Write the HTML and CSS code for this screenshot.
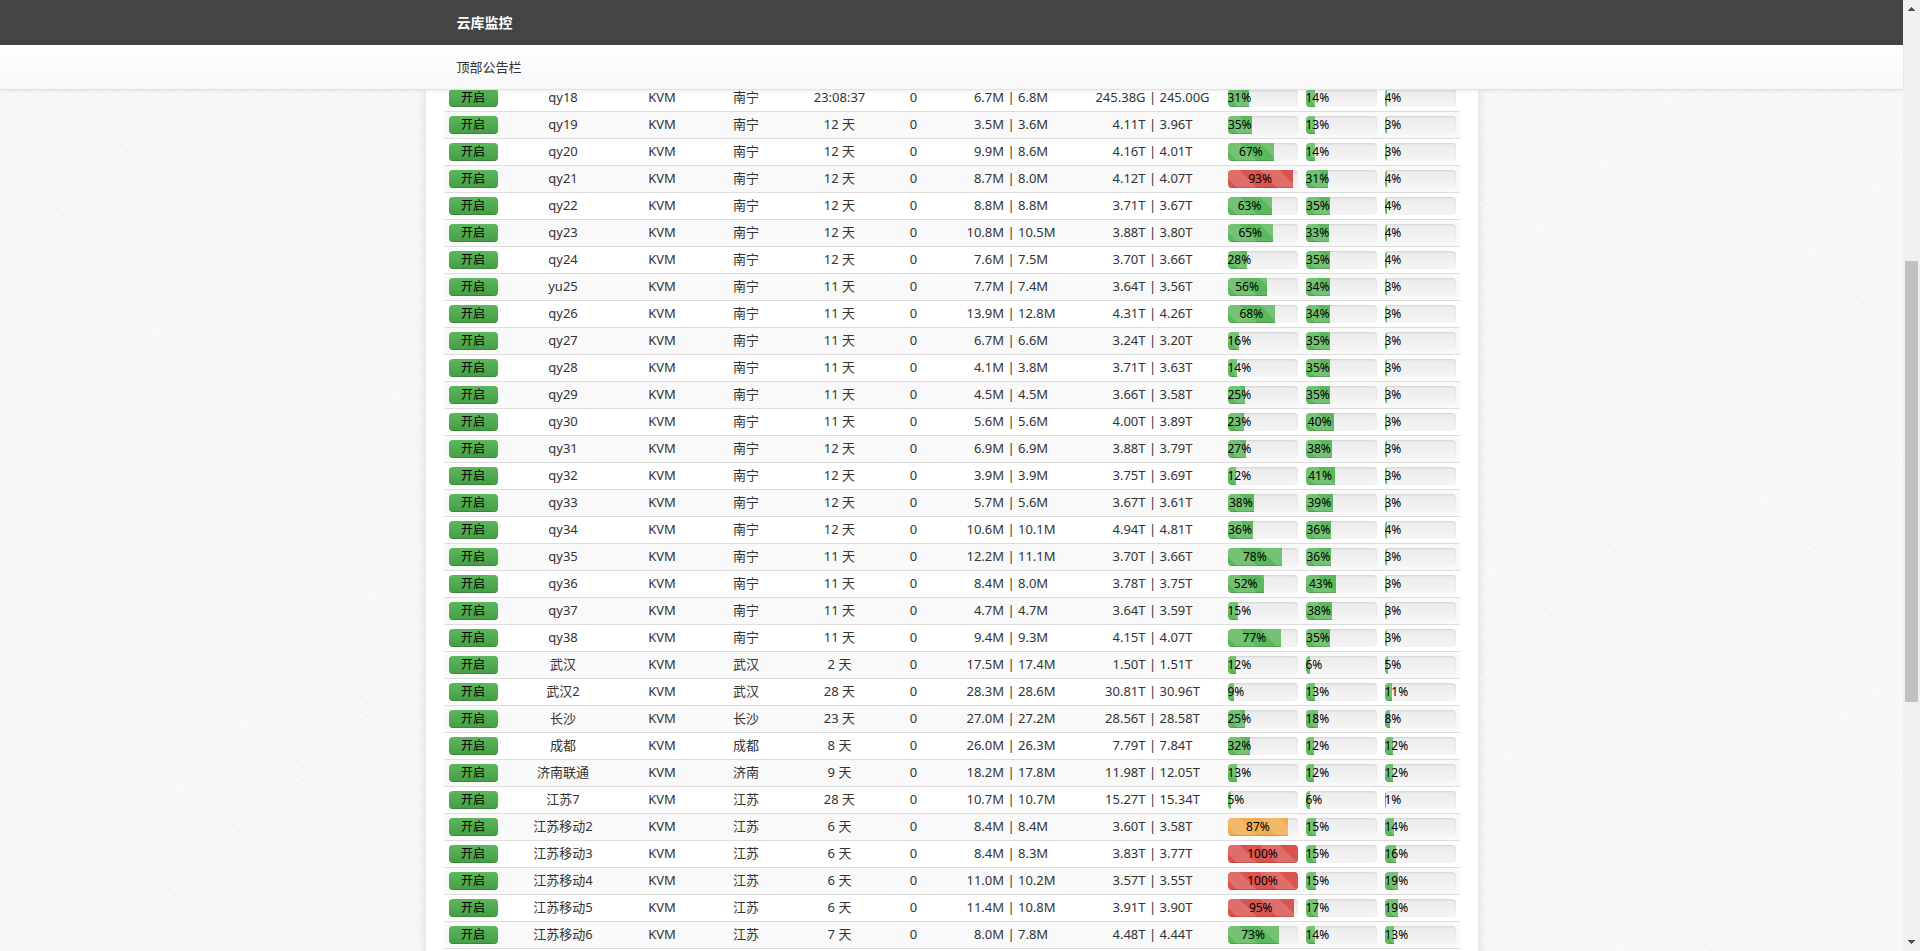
FILE: index.html
```
<!DOCTYPE html>
<html lang="zh-CN">
<head>
<meta charset="utf-8">
<title>云库监控</title>
<link rel="stylesheet" href="styles.css">
</head>
<body>
<div class="page">
  <header class="navbar"><div class="inner"><a class="brand" href="#">云库监控</a></div></header>
  <div class="notice"><div class="inner">顶部公告栏</div></div>
  <main class="content">
    <section class="panel">
      <table class="servers">
        <colgroup>
          <col class="c-status"><col class="c-name"><col class="c-type"><col class="c-place"><col class="c-uptime"><col class="c-load"><col class="c-net"><col class="c-traffic"><col class="c-cpu"><col class="c-ram"><col class="c-disk">
        </colgroup>
        <tbody id="servers"></tbody>
      </table>
    </section>
  </main>
</div>
<div class="scrollbar" aria-hidden="true">
  <svg class="arrow" viewBox="0 0 7 4" shape-rendering="crispEdges"><path d="M3 0h1v1h1v1h1v1h1v1H0V3h1V2h1V1h1z"/></svg>
  <div class="track"><div class="thumb"></div></div>
  <svg class="arrow" viewBox="0 0 7 4" shape-rendering="crispEdges"><path d="M0 0h7v1H6v1H5v1H4v1H3V3H2V2H1V1H0z"/></svg>
</div>
<script src="servers.js"></script>
</body>
</html>
```
FILE: styles.css
```
* { box-sizing: border-box; }
body {
  margin: 0;
  height: 100vh;
  overflow: hidden;
  display: flex;
  font: 13px/16px "Noto Sans", "Noto Sans CJK SC", sans-serif;
  color: #333;
  background: #f7f7f7;
}
.page {
  flex: 1;
  min-width: 0;
  display: flex;
  flex-direction: column;
  background:
    repeating-linear-gradient(-45deg, rgba(255,255,255,.3) 0 1px, transparent 2px 5px),
    repeating-linear-gradient(-38deg, rgba(255,255,255,.25) 0 2px, transparent 3px 11px),
    #f6f6f6;
}
.inner {
  max-width: 1052px;
  margin: 0 auto;
  padding: 0 31px;
}
.navbar {
  flex: none;
  background: #444;
  line-height: 45px;
}
.brand {
  display: block;
  color: #fff;
  font-size: 14px;
  font-weight: bold;
  text-decoration: none;
}
.notice {
  flex: none;
  position: relative;
  z-index: 1;
  line-height: 44px;
  background: linear-gradient(#fff, #f7f7f7);
  border-bottom: 1px solid #e2e2e2;
  box-shadow: 0 1px 3px rgba(0,0,0,.08);
}
.content {
  flex: 1;
  min-height: 0;
}
.panel {
  max-width: 1052px;
  margin: -6px auto 0;
  padding: 0 18px;
  background: #fff;
  box-shadow: 0 0 10px rgba(0,0,0,.12);
}
.servers {
  width: 100%;
  table-layout: fixed;
  border-spacing: 0;
  text-align: center;
  white-space: nowrap;
}
.c-status { width: 58px; }
.c-name { width: 123px; }
.c-type { width: 75px; }
.c-place { width: 93px; }
.c-uptime { width: 94px; }
.c-load { width: 54px; }
.c-net { width: 141px; }
.c-traffic { width: 142px; }
.c-cpu { width: 78px; }
.c-ram { width: 79px; }
.c-disk { width: 79px; }
.servers td {
  height: 27px;
  padding: 3px 4px 5px;
  border-top: 1px solid #ddd;
}
.servers tr:nth-child(even) { background: #f9f9f9; }
.servers .meter { padding: 4px; }
.servers .meter:first-child { padding-left: 5px; }
.progress {
  height: 18px;
  overflow: hidden;
  border-radius: 4px;
  background: linear-gradient(#ebebeb, #f5f5f5);
  box-shadow: inset 0 1px 2px rgba(0,0,0,.1);
  font-size: 12px;
  line-height: 18px;
  color: #000;
}
.bar {
  height: 100%;
  box-shadow: inset 0 -1px 0 rgba(0,0,0,.15);
}
.ok { background-color: #5cb85c; }
.warn { background-color: #f0ad4e; }
.danger { background-color: #d9534f; }
.striped {
  background-image: linear-gradient(45deg, rgba(255,255,255,.15) 25%, transparent 25% 50%, rgba(255,255,255,.15) 50% 75%, transparent 75%);
  background-size: 40px 40px;
  background-position: -8px 0;
}
.online { background: linear-gradient(#5cb85c, #449d44); }
.scrollbar {
  flex: none;
  width: 17px;
  padding: 7px 2px;
  display: flex;
  flex-direction: column;
  align-items: center;
  background: #f0f0f0;
}
.arrow { width: 7px; height: 4px; fill: #505050; }
.track {
  flex: 1;
  align-self: stretch;
  padding: 6px 0;
  display: grid;
  grid-template-rows: 244fr 441fr 232fr;
}
.thumb { grid-row: 2; background: #c1c1c1; }
```
FILE: servers.js
```
// name, place, uptime, load, network, traffic, cpu, ram, disk
const servers = [
  ["qy18", "南宁", "23:08:37", 0, "6.7M | 6.8M", "245.38G | 245.00G", 31, 14, 4],
  ["qy19", "南宁", "12 天", 0, "3.5M | 3.6M", "4.11T | 3.96T", 35, 13, 3],
  ["qy20", "南宁", "12 天", 0, "9.9M | 8.6M", "4.16T | 4.01T", 67, 14, 3],
  ["qy21", "南宁", "12 天", 0, "8.7M | 8.0M", "4.12T | 4.07T", 93, 31, 4],
  ["qy22", "南宁", "12 天", 0, "8.8M | 8.8M", "3.71T | 3.67T", 63, 35, 4],
  ["qy23", "南宁", "12 天", 0, "10.8M | 10.5M", "3.88T | 3.80T", 65, 33, 4],
  ["qy24", "南宁", "12 天", 0, "7.6M | 7.5M", "3.70T | 3.66T", 28, 35, 4],
  ["yu25", "南宁", "11 天", 0, "7.7M | 7.4M", "3.64T | 3.56T", 56, 34, 3],
  ["qy26", "南宁", "11 天", 0, "13.9M | 12.8M", "4.31T | 4.26T", 68, 34, 3],
  ["qy27", "南宁", "11 天", 0, "6.7M | 6.6M", "3.24T | 3.20T", 16, 35, 3],
  ["qy28", "南宁", "11 天", 0, "4.1M | 3.8M", "3.71T | 3.63T", 14, 35, 3],
  ["qy29", "南宁", "11 天", 0, "4.5M | 4.5M", "3.66T | 3.58T", 25, 35, 3],
  ["qy30", "南宁", "11 天", 0, "5.6M | 5.6M", "4.00T | 3.89T", 23, 40, 3],
  ["qy31", "南宁", "12 天", 0, "6.9M | 6.9M", "3.88T | 3.79T", 27, 38, 3],
  ["qy32", "南宁", "12 天", 0, "3.9M | 3.9M", "3.75T | 3.69T", 12, 41, 3],
  ["qy33", "南宁", "12 天", 0, "5.7M | 5.6M", "3.67T | 3.61T", 38, 39, 3],
  ["qy34", "南宁", "12 天", 0, "10.6M | 10.1M", "4.94T | 4.81T", 36, 36, 4],
  ["qy35", "南宁", "11 天", 0, "12.2M | 11.1M", "3.70T | 3.66T", 78, 36, 3],
  ["qy36", "南宁", "11 天", 0, "8.4M | 8.0M", "3.78T | 3.75T", 52, 43, 3],
  ["qy37", "南宁", "11 天", 0, "4.7M | 4.7M", "3.64T | 3.59T", 15, 38, 3],
  ["qy38", "南宁", "11 天", 0, "9.4M | 9.3M", "4.15T | 4.07T", 77, 35, 3],
  ["武汉", "武汉", "2 天", 0, "17.5M | 17.4M", "1.50T | 1.51T", 12, 6, 5],
  ["武汉2", "武汉", "28 天", 0, "28.3M | 28.6M", "30.81T | 30.96T", 9, 13, 11],
  ["长沙", "长沙", "23 天", 0, "27.0M | 27.2M", "28.56T | 28.58T", 25, 18, 8],
  ["成都", "成都", "8 天", 0, "26.0M | 26.3M", "7.79T | 7.84T", 32, 12, 12],
  ["济南联通", "济南", "9 天", 0, "18.2M | 17.8M", "11.98T | 12.05T", 13, 12, 12],
  ["江苏7", "江苏", "28 天", 0, "10.7M | 10.7M", "15.27T | 15.34T", 5, 6, 1],
  ["江苏移动2", "江苏", "6 天", 0, "8.4M | 8.4M", "3.60T | 3.58T", 87, 15, 14],
  ["江苏移动3", "江苏", "6 天", 0, "8.4M | 8.3M", "3.83T | 3.77T", 100, 15, 16],
  ["江苏移动4", "江苏", "6 天", 0, "11.0M | 10.2M", "3.57T | 3.55T", 100, 15, 19],
  ["江苏移动5", "江苏", "6 天", 0, "11.4M | 10.8M", "3.91T | 3.90T", 95, 17, 19],
  ["江苏移动6", "江苏", "7 天", 0, "8.0M | 7.8M", "4.48T | 4.44T", 73, 14, 13]
];

const level = (p) => (p >= 90 ? "danger" : p >= 80 ? "warn" : "ok");
const meter = (p) =>
  `<td class="meter"><div class="progress"><div class="bar striped ${level(p)}" style="width:${p}%">${p}%</div></div></td>`;

document.getElementById("servers").innerHTML = servers
  .map(([name, place, uptime, load, net, traffic, ...meters]) =>
    `<tr><td class="meter"><div class="progress"><div class="bar online">开启</div></div></td>` +
    [name, "KVM", place, uptime, load, net, traffic].map((t) => `<td>${t}</td>`).join("") +
    meters.map(meter).join("") + "</tr>")
  .join("") + '<tr><td colspan="11"></td></tr>';
```
